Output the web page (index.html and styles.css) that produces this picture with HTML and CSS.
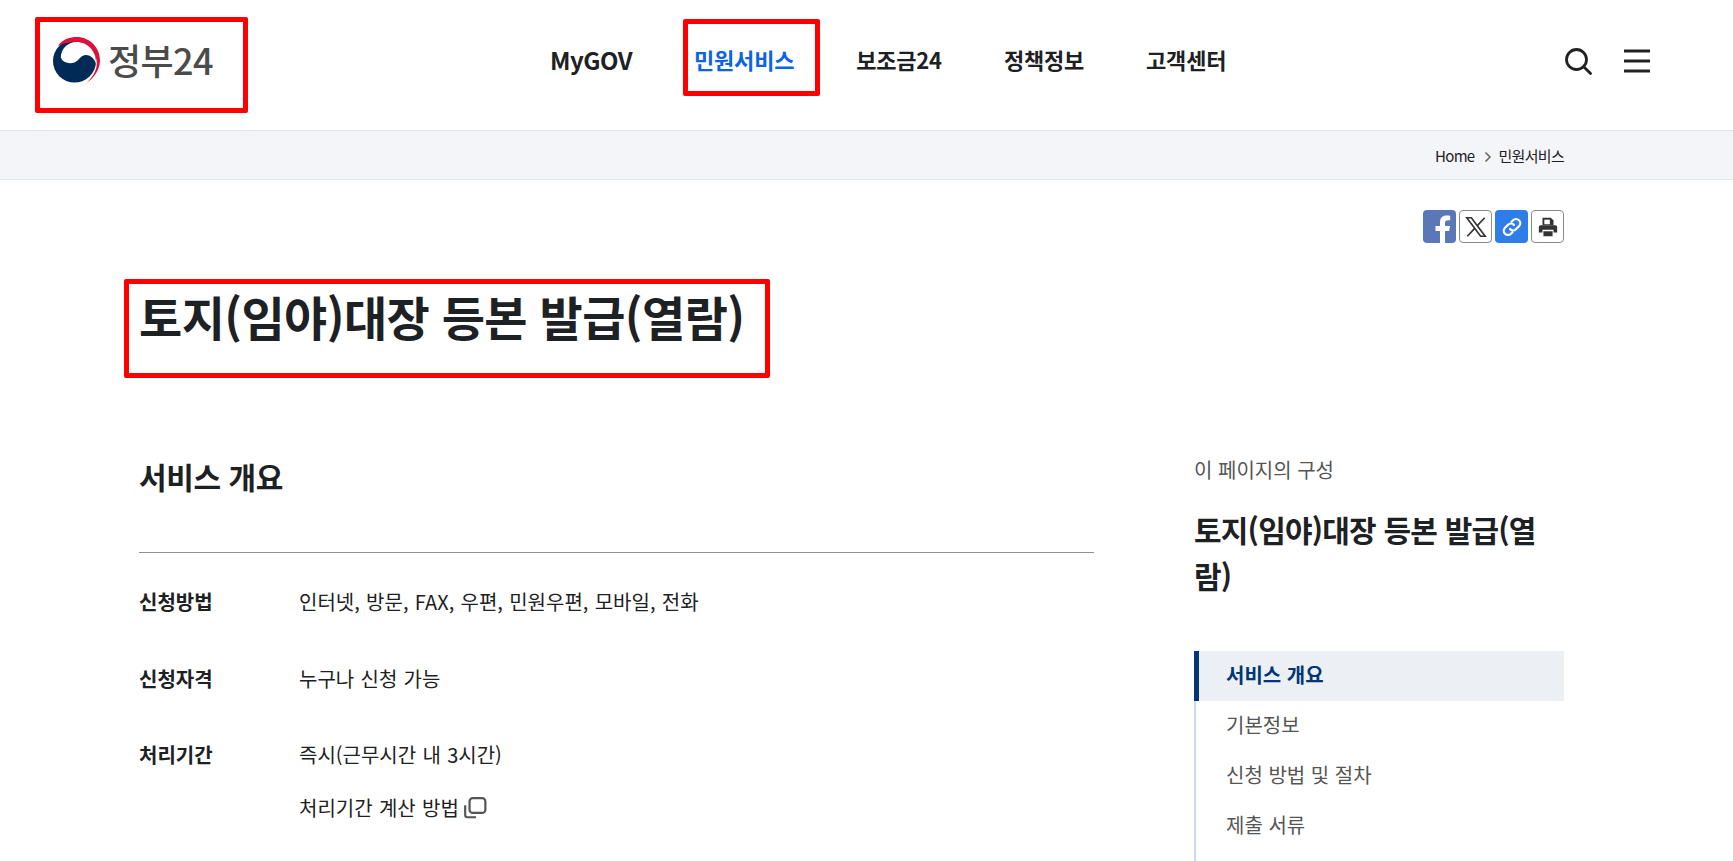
FILE: index.html
```html
<!DOCTYPE html>
<html lang="ko">
  <head>
    <meta charset="utf-8">
    <title>토지(임야)대장 등본 발급(열람) | 정부24</title>
    <link rel="stylesheet" href="styles.css">
  </head>
  <body>
    <header class="header">
      <a class="logo">
        <svg class="logo-mark" viewBox="0 0 48 48" width="47" height="47">
          <circle cx="22" cy="24.500" r="22" fill="#012b57"/>
          <path d="M5 9C10 2 18 0 24 0 38 0 48 11 48 24 48 33 42 42 34 47 41 41 46 32 44.500 24 43 13 34 5 24 5 16 5 9 7 5 9z" fill="#e0103a"/>
          <path d="M8 21C8 12 15 5 24 5 35 5 44.500 14 44 27.500 42 21 37 18 33 18.500 28 19 27 24 22 26 16 28 10 26 8 21z" fill="#fff"/>
        </svg>
        <span class="logo-text">정부24</span>
      </a>
      <nav class="gnb">
        <a class="en">MyGOV</a>
        <a class="on">민원서비스</a>
        <a>보조금24</a>
        <a>정책정보</a>
        <a>고객센터</a>
      </nav>
      <div class="util">
        <svg viewBox="0 0 28 28" width="28" height="28" fill="none" stroke="#222" stroke-width="2.800">
          <circle cx="12.500" cy="12.500" r="10"/>
          <path d="M20 20l6.500 6.500" stroke-linecap="round"/>
        </svg>
        <svg viewBox="0 0 26 24" width="26" height="24" fill="none" stroke="#222" stroke-width="2.800">
          <path d="M0 2h26M0 12h26M0 22h26"/>
        </svg>
      </div>
    </header>

    <div class="crumb-bar">
      <div class="crumbs">
        <span>Home</span>
        <svg class="crumb-arrow" viewBox="0 0 8 12" width="8" height="12" fill="none" stroke="#666" stroke-width="1.500"><path d="M1.500 1.500L6 6l-4.500 4.500"/></svg>
        <span>민원서비스</span>
      </div>
    </div>

    <main class="wrap">
      <div class="share">
        <a class="btn fb">
          <svg viewBox="0 0 32 32" width="32" height="32"><path d="M21 32V20h4.200l.8-5h-5v-3c0-1.700.7-2.800 3-2.800h2.200V4.800C25.300 4.600 24 4.500 22.500 4.500c-4 0-6.500 2.400-6.500 6.700V15h-4.500v5H16v12z" fill="#fff"/></svg>
        </a>
        <a class="btn line">
          <svg viewBox="0 0 24 24" width="26" height="26" fill="none" stroke="#333"><path d="M3.500 3.500h4.200l12.800 17h-4.200z" stroke-width="1.500"/><path d="M20 3.500l-7 7.500M4 20.500l7-7.500" stroke-width="1.500"/></svg>
        </a>
        <a class="btn link">
          <svg viewBox="0 0 24 24" width="24" height="24" fill="none" stroke="#fff" stroke-width="2.200" stroke-linecap="round"><path d="M10 14a4 4 0 0 0 6 .300l3-3a4.200 4.200 0 0 0-6-6l-1.500 1.500"/><path d="M14 10a4 4 0 0 0-6-.300l-3 3a4.200 4.200 0 0 0 6 6l1.500-1.500"/></svg>
        </a>
        <a class="btn line">
          <svg viewBox="0 0 24 24" width="22" height="22" fill="#333"><path d="M6 2h9l3 3v5H6z"/><rect x="8" y="4" width="6" height="5" fill="#fff"/><path d="M4 10h16a2 2 0 0 1 2 2v6h-4v-3H6v3H2v-6a2 2 0 0 1 2-2z"/><path d="M7 16.500h10V22H7z"/></svg>
        </a>
      </div>

      <h1 class="page-title">토지(임야)대장 등본 발급(열람)</h1>

      <div class="columns">
        <section class="content">
          <h2 class="section-title">서비스 개요</h2>
          <dl class="info">
            <div class="row">
              <dt>신청방법</dt>
              <dd>인터넷, 방문, FAX, 우편, 민원우편, 모바일, 전화</dd>
            </div>
            <div class="row">
              <dt>신청자격</dt>
              <dd>누구나 신청 가능</dd>
            </div>
            <div class="row">
              <dt>처리기간</dt>
              <dd>
                <p>즉시(근무시간 내 3시간)</p>
                <p class="calc">처리기간 계산 방법
                  <svg viewBox="0 0 22 22" width="24" height="24" fill="none" stroke="#555" stroke-width="2"><rect x="6" y="2" width="14.500" height="13.500" rx="3"/><path d="M2 8.500v9a2 2 0 0 0 2 2h8"/></svg>
                </p>
              </dd>
            </div>
          </dl>
        </section>

        <aside class="side">
          <p class="side-label">이 페이지의 구성</p>
          <p class="side-title">토지(임야)대장 등본 발급(열람)</p>
          <ul class="toc">
            <li class="on">서비스 개요</li>
            <li>기본정보</li>
            <li>신청 방법 및 절차</li>
            <li>제출 서류</li>
          </ul>
        </aside>
      </div>
    </main>

    <!-- red annotation boxes drawn over the screenshot -->
    <div class="mark mark-logo"></div>
    <div class="mark mark-nav"></div>
    <div class="mark mark-title"></div>
  </body>
</html>
```

FILE: styles.css
```css
* {
  box-sizing: border-box;
}

html, body {
  height: 861px;
  overflow: hidden;
}

body {
  margin: 0;
  font-family: "Noto Sans CJK KR", "Noto Sans", sans-serif;
  color: #1e2124;
  background: #fff;
  position: relative;
}

p, h1, h2, dl, dd, ul {
  margin: 0;
  padding: 0;
}

/* header */
.header {
  height: 130px;
  display: flex;
  align-items: center;
  padding: 0 83px 0 53px;
  position: relative;
}

.logo {
  display: flex;
  align-items: center;
  gap: 8px;
  margin-top: -12px;
}

.logo-mark {
  margin-top: 3px;
}

.logo-text {
  font-size: 36px;
  font-weight: 500;
  letter-spacing: -0.6px;
  color: #4b4b4b;
}

.gnb {
  position: absolute;
  left: 550px;
  top: 0;
  height: 118px;
  display: flex;
  align-items: center;
  gap: 62px;
}

.gnb a {
  font-size: 22px;
  font-weight: 700;
  letter-spacing: -0.2px;
}

.gnb a.en {
  font-size: 24px;
  letter-spacing: -0.5px;
}

.gnb a.on {
  color: #0b63e5;
}

.util {
  margin-left: auto;
  display: flex;
  align-items: center;
  gap: 32px;
  margin-top: -8px;
}

/* breadcrumb */
.crumb-bar {
  height: 50px;
  background: #f4f5f9;
  border-top: 1px solid #e2e4ea;
  border-bottom: 1px solid #e6e7eb;
  display: flex;
  align-items: center;
  justify-content: flex-end;
  padding-right: 169px;
}

.crumbs {
  display: flex;
  align-items: center;
  gap: 8px;
  font-size: 15px;
  letter-spacing: -0.7px;
}

.crumb-arrow {
  margin: 3px -2px 0 2px;
}

/* body */
.wrap {
  padding: 30px 169px 0 139px;
}

.share {
  display: flex;
  justify-content: flex-end;
  gap: 3px;
}

.btn {
  width: 33px;
  height: 33px;
  border-radius: 4px;
  display: flex;
  align-items: center;
  justify-content: center;
  overflow: hidden;
}

.fb {
  background: #5a78b8;
  align-items: flex-end;
}

.line {
  border: 1px solid #8a8a8a;
  background: #fff;
}

.link {
  background: #2f7de8;
}

.page-title {
  font-size: 47px;
  font-weight: 700;
  line-height: 58px;
  margin-top: 44px;
  letter-spacing: -0.6px;
}

.columns {
  display: flex;
  justify-content: space-between;
  margin-top: 109px;
}

.content {
  width: 955px;
}

.section-title {
  font-size: 30px;
  font-weight: 700;
  line-height: 44px;
  padding-bottom: 54px;
  border-bottom: 1px solid #909090;
  letter-spacing: -0.4px;
}

.row {
  display: flex;
  font-size: 20px;
  line-height: 30px;
  margin-top: 34px;
}

.row + .row {
  margin-top: 47px;
}

.row + .row + .row {
  margin-top: 46px;
}

.row dt {
  width: 160px;
  font-weight: 700;
}

.row dd {
  word-spacing: 0.7px;
}

.calc {
  margin-top: 23px;
  display: flex;
  align-items: center;
  gap: 4px;
}

.side {
  width: 370px;
  padding-top: 1px;
}

.side-label {
  font-size: 20px;
  line-height: 30px;
  color: #555;
}

.side-title {
  font-size: 30px;
  font-weight: 700;
  line-height: 46px;
  margin-top: 21px;
  letter-spacing: -0.8px;
}

.toc {
  list-style: none;
  margin-top: 53px;
  min-height: 210px;
  border-left: 2px solid #cdd8e8;
  font-size: 20px;
  color: #555;
}

.toc li {
  height: 50px;
  line-height: 48px;
  padding-left: 30px;
}

.toc li.on {
  margin-left: -2px;
  padding-left: 27px;
  border-left: 5px solid #003675;
  background: #eceff4;
  color: #003675;
  font-weight: 700;
}

/* red boxes */
.mark {
  position: absolute;
  border: 5px solid #ff0000;
  border-radius: 2px;
}

.mark-logo {
  left: 35px;
  top: 17px;
  width: 213px;
  height: 96px;
}

.mark-nav {
  left: 683px;
  top: 19px;
  width: 137px;
  height: 77px;
}

.mark-title {
  left: 124px;
  top: 279px;
  width: 646px;
  height: 99px;
}
```
